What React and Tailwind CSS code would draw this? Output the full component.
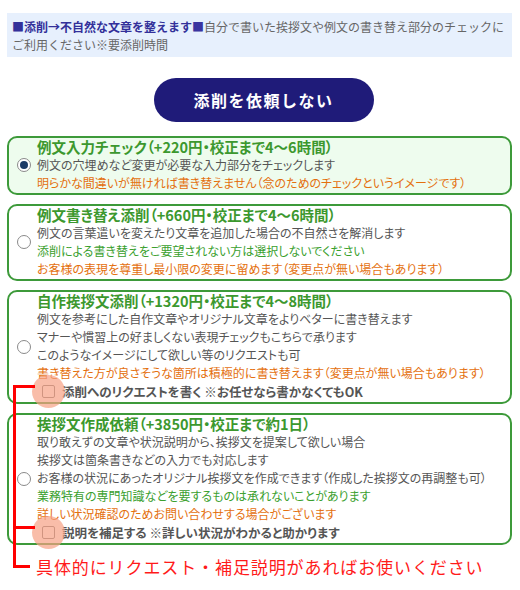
import React from 'react';

const font = { fontFamily: '"Noto Sans CJK JP", "Noto Sans", sans-serif' };

function Radio({ checked }) {
  return (
    <span className="w-[14px] h-[14px] rounded-full border border-[#8a8a8a] bg-white flex items-center justify-center shrink-0">
      {checked && <span className="w-[8px] h-[8px] rounded-full bg-[#1b3a66]" />}
    </span>
  );
}

function Check({ label }) {
  return (
    <div className="flex items-center h-[19px] ml-[5px]">
      <span className="relative w-[13px] h-[13px] shrink-0">
        <span className="absolute inset-0 rounded-[2px] border border-[#777] bg-white" />
        <span className="absolute left-[-10px] top-[-10px] w-[33px] h-[33px] rounded-full bg-[#f7a184]/70" />
      </span>
      <span className="ml-[7px] text-[12.5px] font-bold text-[#555] leading-[18px] [font-feature-settings:'palt']">{label}</span>
    </div>
  );
}

function Card({ checked, title, lines, check }) {
  return (
    <div className={`border-2 border-[#3d9a3a] rounded-[10px] flex items-center pb-[1px] ${checked ? 'bg-[#eefcee]' : 'bg-white'}`}>
      <div className="w-[28px] flex justify-center pl-[2px]">
        <Radio checked={checked} />
      </div>
      <div className="flex-1 min-w-0">
        <div className="text-[14.5px] font-bold text-[#3c982e] leading-[18px] [font-feature-settings:'palt']">{title}</div>
        {lines.map(([t, c], i) => (
          <div key={i} className={`text-[12px] leading-[18px] whitespace-nowrap [font-feature-settings:'palt'] ${c}`}>{t}</div>
        ))}
        {check && <Check label={check} />}
      </div>
    </div>
  );
}

const gray = 'text-[#555]';
const green = 'text-[#3aa02e]';
const orange = 'text-[#e4700e]';

export default function App() {
  return (
    <div className="bg-white w-[520px] h-[590px] pt-[13px] pl-[7px] pr-[8px]" style={font}>
      <div className="bg-[#e7f0fd] px-[5px] pt-[5px] pb-[3px] text-[12px] leading-[18px] text-[#666]">
        <span className="font-bold text-[#33309a]">■添削→不自然な文章を整えます</span>
        <span className="text-[#3a34a0]">■</span>自分で書いた挨拶文や例文の書き替え部分のチェックにご利用ください※要添削時間
      </div>

      <div className="flex justify-center mt-[21px] pl-[8px]">
        <button className="w-[220px] h-[44px] rounded-full bg-[#1f1b79] text-white text-[16px] font-bold tracking-[1.5px]">
          添削を依頼しない
        </button>
      </div>

      <div className="mt-[14px]">
        <Card
          checked
          title="例文入力チェック（+220円・校正まで4〜6時間）"
          lines={[
            ['例文の穴埋めなど変更が必要な入力部分をチェックします', gray],
            ['明らかな間違いが無ければ書き替えません（念のためのチェックというイメージです）', orange],
          ]}
        />
      </div>
      <div className="mt-[9px]">
        <Card
          title="例文書き替え添削（+660円・校正まで4〜6時間）"
          lines={[
            ['例文の言葉遣いを変えたり文章を追加した場合の不自然さを解消します', gray],
            ['添削による書き替えをご要望されない方は選択しないでください', green],
            ['お客様の表現を尊重し最小限の変更に留めます（変更点が無い場合もあります）', orange],
          ]}
        />
      </div>

      <div className="relative mt-[9px]">
        <Card
          title="自作挨拶文添削（+1320円・校正まで4〜8時間）"
          lines={[
            ['例文を参考にした自作文章やオリジナル文章をよりベターに書き替えます', gray],
            ['マナーや慣習上の好ましくない表現チェックもこちらで承ります', gray],
            ['このようなイメージにして欲しい等のリクエストも可', gray],
            ['書き替えた方が良さそうな箇所は積極的に書き替えます（変更点が無い場合もあります）', orange],
          ]}
          check="添削へのリクエストを書く ※お任せなら書かなくてもOK"
        />
        <div className="mt-[9px]">
          <Card
            title="挨拶文作成依頼（+3850円・校正まで約1日）"
            lines={[
              ['取り敢えずの文章や状況説明から、挨拶文を提案して欲しい場合', gray],
              ['挨拶文は箇条書きなどの入力でも対応します', gray],
              ['お客様の状況にあったオリジナル挨拶文を作成できます（作成した挨拶文の再調整も可）', gray],
              ['業務特有の専門知識などを要するものは承れないことがあります', green],
              ['詳しい状況確認のためお問い合わせする場合がございます', orange],
            ]}
            check="説明を補足する ※詳しい状況がわかると助かります"
          />
        </div>
        <div className="mt-[9px] pl-[29px] text-[17px] leading-[26px] text-[#ff1a1a] tracking-[0.9px]">
          具体的にリクエスト・補足説明があればお使いください
        </div>

        <div className="absolute left-[6px] top-[95px] w-[3px] h-[183px] bg-[#ff0000]" />
        <div className="absolute left-[6px] top-[95px] w-[22px] h-[3px] bg-[#ff0000]" />
        <div className="absolute left-[6px] top-[236px] w-[22px] h-[3px] bg-[#ff0000]" />
        <div className="absolute left-[6px] top-[275px] w-[17px] h-[3px] bg-[#ff0000]" />
      </div>
    </div>
  );
}
